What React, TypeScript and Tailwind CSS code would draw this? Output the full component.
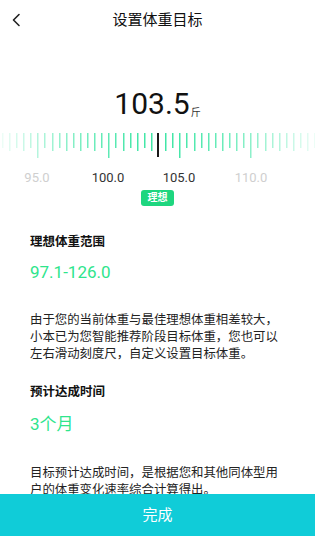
import React from "react";

// Ruler: value at the centre line and the tick step in px per 0.5 unit
const CURRENT = 103.5;
const CENTER_X = 158;
const PX_PER_UNIT = 14.2;

function Ruler() {
  const ticks = [];
  for (let v = 92.5; v <= 114.5; v += 0.5) {
    if (v === CURRENT) continue;
    const x = Math.round(CENTER_X + (v - CURRENT) * PX_PER_UNIT);
    const d = Math.abs(x - CENTER_X);
    const opacity = Math.max(0.06, 1 - 0.92 * Math.pow(d / 158, 1.5));
    let h = 15;
    if (Number.isInteger(v)) h = 18;
    if (v % 5 === 0) h = 25;
    ticks.push(
      <rect key={v} x={x} y={0} width={1.5} height={h} fill="#3fe6a6" fillOpacity={opacity} />
    );
  }
  return (
    <svg width="315" height="26" viewBox="0 0 315 26" className="block">
      {ticks}
      <rect x={CENTER_X - 1} y={0} width={2} height={24} fill="#1a1a1a" />
    </svg>
  );
}

const labels = [
  { v: "95.0", x: 37, dark: false },
  { v: "100.0", x: 108, dark: true },
  { v: "105.0", x: 179, dark: true },
  { v: "110.0", x: 251, dark: false },
];

export default function App() {
  return (
    <div
      className="relative min-h-[536px] w-[315px] bg-white text-[#222]"
      style={{ fontFamily: 'Roboto, "Noto Sans CJK SC", sans-serif' }}
    >
      {/* header */}
      <div className="relative flex h-[40px] items-center justify-center">
        <button className="absolute left-[10px] top-[12px] flex h-[16px] w-[12px] items-center justify-center">
          <svg width="10" height="14" viewBox="0 0 10 14" fill="none">
            <path d="M8 1.5L2.5 7L8 12.5" stroke="#222" strokeWidth="1.6" strokeLinecap="round" strokeLinejoin="round" />
          </svg>
        </button>
        <h1 className="text-[15px] font-normal text-[#111]">设置体重目标</h1>
      </div>

      {/* current value */}
      <div className="mt-[49px] flex h-[30px] items-end justify-center leading-none">
        <span className="text-[30px] leading-none text-[#111]">103.5</span>
        <span className="mb-[1px] ml-[1px] text-[10px] leading-none text-[#333]">斤</span>
      </div>

      {/* ruler */}
      <div className="mt-[14px]">
        <Ruler />
      </div>
      <div className="relative mt-[11px] h-[16px] text-[13px] leading-[16px]">
        {labels.map((l) => (
          <span
            key={l.v}
            className={`absolute top-0 -translate-x-1/2 ${l.dark ? "text-[#333]" : "text-[#cfcfcf]"}`}
            style={{ left: l.x }}
          >
            {l.v}
          </span>
        ))}
      </div>
      <div className="mt-[4px] flex justify-center">
        <span className="flex h-[16px] w-[33px] items-center justify-center rounded-[3px] bg-[#1ed67f] text-[10px] font-bold leading-none text-white">
          理想
        </span>
      </div>

      {/* info */}
      <div className="px-[30px]">
        <h2 className="mt-[27px] text-[12.5px] font-bold leading-[18px] text-[#111]">理想体重范围</h2>
        <p className="mt-[10px] text-[17px] leading-[22px] text-[#2ee58c]">97.1-126.0</p>
        <p className="mt-[28px] text-[12.4px] leading-[17px] text-[#222]">
          由于您的当前体重与最佳理想体重相差较大，小本已为您智能推荐阶段目标体重，您也可以左右滑动刻度尺，自定义设置目标体重。
        </p>

        <h2 className="mt-[21px] text-[12.5px] font-bold leading-[18px] text-[#111]">预计达成时间</h2>
        <p className="mt-[12px] text-[17px] leading-[22px] text-[#2ee58c]">3个月</p>
        <p className="mt-[29px] pb-[60px] text-[12.4px] leading-[17px] text-[#222]">
          目标预计达成时间，是根据您和其他同体型用户的体重变化速率综合计算得出。
        </p>
      </div>

      {/* bottom action */}
      <button className="fixed bottom-0 left-0 flex h-[42px] w-[315px] items-center justify-center bg-[#10ccd8] text-[15px] text-white">
        完成
      </button>
    </div>
  );
}
